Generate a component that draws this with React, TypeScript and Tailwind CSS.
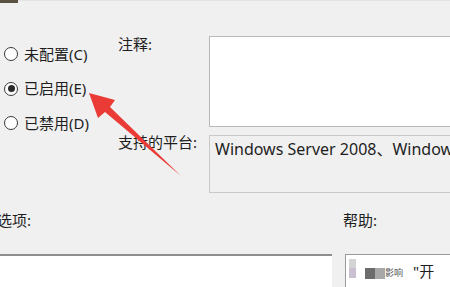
import React from 'react';

const FONT = 'font-["Noto_Sans","Noto_Sans_CJK_SC",sans-serif]';

const OPTIONS = [
  { label: '未配置(C)', checked: false },
  { label: '已启用(E)', checked: true },
  { label: '已禁用(D)', checked: false },
];

function Radio({ label, checked }: { label: string; checked: boolean }) {
  return (
    <div className="flex h-[34.5px] items-center gap-[6px] pl-[4px]">
      <span className="flex h-[14px] w-[14px] shrink-0 items-center justify-center rounded-full border border-[#3a3a3a] bg-white">
        {checked && <span className="h-[7px] w-[7px] rounded-full bg-[#2a2a2a]" />}
      </span>
      <span className="text-[15px] leading-none text-[#1e1e1e]">{label}</span>
    </div>
  );
}

export default function App() {
  return (
    <div className={`relative h-[287px] w-[450px] overflow-hidden bg-[#f0f0f0] ${FONT}`}>
      {/* top strip: remains of the window icon */}
      <div className="flex h-[3px] items-start">
        <div className="h-[3px] w-[18px] bg-[#5a5240]" />
        <div className="h-px flex-1 bg-[#e4e4e4]" />
      </div>

      {/* state / comment / platform */}
      <div className="mt-[31px] flex">
        <div className="w-[118px] shrink-0 pt-[3px]">
          {OPTIONS.map((o) => (
            <Radio key={o.label} label={o.label} checked={o.checked} />
          ))}
        </div>

        <div className="w-[91px] shrink-0 text-[15px] leading-[18px] text-[#1e1e1e]">
          <div className="pt-[1px]">注释:</div>
          <div className="mt-[80px]">支持的平台:</div>
        </div>

        <div className="flex w-[270px] shrink-0 flex-col gap-[8px] pt-[2px]">
          <div className="h-[91px] border border-[#b9b9b9] bg-white" />
          <div className="h-[58px] border border-[#c9c9c9] bg-[#f0f0f0] px-[5px] pt-[2px] text-[16px] leading-[22px] whitespace-nowrap text-[#1e1e1e]">
            Windows Server 2008、Windows Server 2003
          </div>
        </div>
      </div>

      {/* section labels */}
      <div className="mt-[18px] flex text-[15px] leading-[18px] text-[#1e1e1e]">
        <div className="ml-[-3px] w-[346px]">选项:</div>
        <div>帮助:</div>
      </div>

      {/* option / help panes */}
      <div className="mt-[25px] flex h-[40px]">
        <div className="w-[332px] border-t-2 border-[#8e8e8e] bg-white" />
        <div className="ml-[13px] flex flex-1 items-start border-t border-l border-[#9a9a9a] bg-white pt-[4px]">
          <div className="ml-[3px] flex flex-col">
            <div className="h-[9px] w-[7px] bg-[#d4d4d4]" />
            <div className="h-[10px] w-[7px] bg-[#cbbfd2]" />
          </div>
          <div className="ml-[9px] mt-[9px] h-[11px] w-[10px] bg-[#6c6c6c]" />
          <div className="mt-[9px] h-[11px] w-[10px] bg-[#a8a8a8]" />
          <span className="mt-[8px] text-[9px] leading-[12px] text-[#555]">影响</span>
          <span className="ml-[10px] mt-[3px] text-[15px] leading-[18px] text-[#1e1e1e]">"开</span>
        </div>
      </div>

      {/* red annotation arrow */}
      <svg className="pointer-events-none absolute left-0 top-0" width="450" height="287" viewBox="0 0 450 287">
        <polygon
          points="89,93 115,100 110,107 181,176 105,112 98,118"
          fill="#ea3b36"
        />
      </svg>
    </div>
  );
}
